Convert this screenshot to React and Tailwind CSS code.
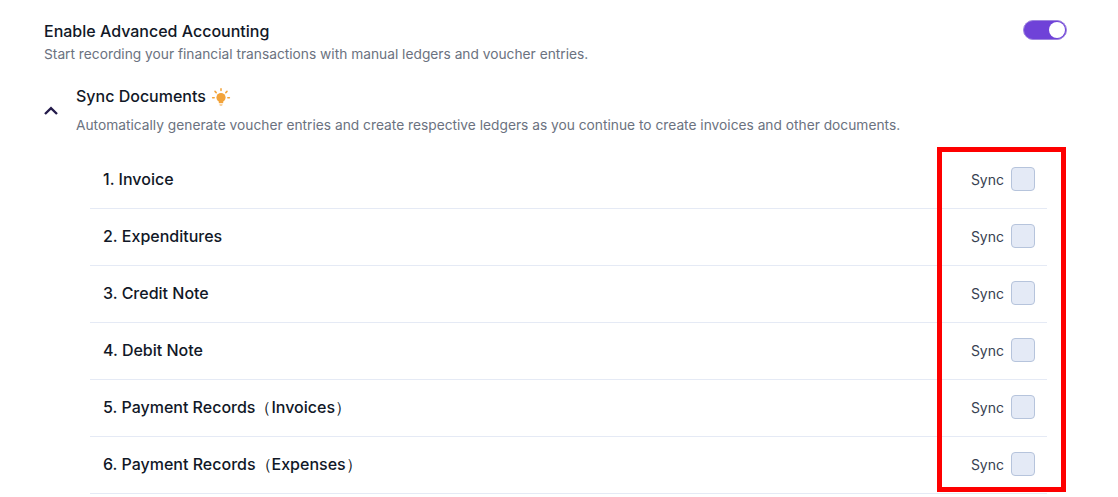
import React from "react";

const rows = [
  "1. Invoice",
  "2. Expenditures",
  "3. Credit Note",
  "4. Debit Note",
  "5. Payment Records（Invoices）",
  "6. Payment Records（Expenses）",
];

function Bulb() {
  return (
    <svg width="20" height="20" viewBox="0 -2 20 20" className="ml-[5px] overflow-visible" fill="none">
      <circle cx="10" cy="9.5" r="4.6" fill="#f2a33a" />
      <path d="M7.8 13h4.4v2.2H7.8z" fill="#f2a33a" />
      <path d="M8.3 16.3h3.4l-.6 1.4H8.9z" fill="#f6c27f" />
      <path d="M10 .8v1.6M4 3.4l1.2 1.2M16 3.4l-1.2 1.2M1.6 9.8h1.6M16.8 9.8h1.6" stroke="#f2a33a" strokeWidth="1.5" strokeLinecap="round" />
    </svg>
  );
}

export default function App() {
  return (
    <div className="relative h-[497px] w-[1118px] overflow-hidden bg-white pl-[44px] pr-[51px] pt-[20px] font-['Inter','Liberation_Sans',sans-serif]">
      <div className="flex items-start justify-between">
        <div>
          <div className="text-[16px] leading-[22px] font-medium text-[#111827]">Enable Advanced Accounting</div>
          <div className="mt-[2px] text-[13.75px] leading-[20px] text-[#6b7280]">
            Start recording your financial transactions with manual ledgers and voucher entries.
          </div>
        </div>
        <div className="flex h-[20px] w-[44px] items-center justify-end rounded-full border border-[#9f86e0] bg-[#6f42d8] pr-[1px]">
          <div className="h-[16px] w-[16px] rounded-full bg-white" />
        </div>
      </div>

      <div className="mt-[21px] flex items-center">
        <svg width="14" height="9" viewBox="0 0 14 9" fill="none" className="w-[14px] shrink-0">
          <path d="M1 8 7 2.2 13 8" stroke="#241b4b" strokeWidth="2.4" />
        </svg>
        <div className="ml-[18px]">
          <div className="flex items-center text-[16px] leading-[22px] font-medium text-[#111827]">
            Sync Documents
            <Bulb />
          </div>
          <div className="mt-[8px] text-[13.75px] leading-[20px] text-[#6b7280]">
            Automatically generate voucher entries and create respective ledgers as you continue to create invoices and other documents.
          </div>
        </div>
      </div>

      <div className="ml-[46px] mr-[20px] mt-[17px]">
        {rows.map((r) => (
          <div key={r} className="flex h-[57px] items-center justify-between border-b border-[#e5eaf5] pb-[2px] pl-[13px] pr-[12px]">
            <span className="text-[16px] font-medium text-[#111827]">{r}</span>
            <div className="flex items-center gap-[7px]">
              <span className="text-[14px] text-[#374151]">Sync</span>
              <div className="h-[24px] w-[24px] rounded-[4px] border border-[#b6c4dc] bg-[#e4eaf6]" />
            </div>
          </div>
        ))}
      </div>

      <div className="absolute left-[937px] top-[147px] h-[345px] w-[129px] border-[5px] border-[#fe0000]" />
    </div>
  );
}
